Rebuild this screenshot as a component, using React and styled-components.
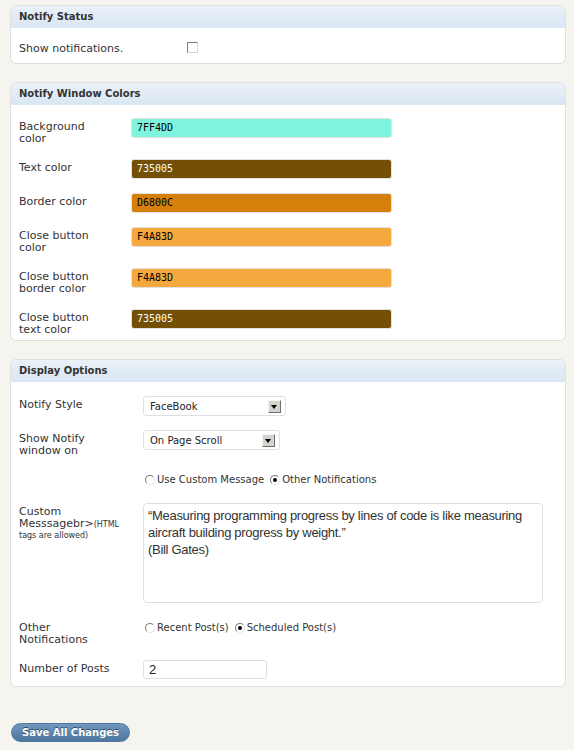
import styled, { createGlobalStyle } from "styled-components";

const colorFields = [
  { label: "Background color", value: "7FF4DD" },
  { label: "Text color", value: "735005" },
  { label: "Border color", value: "D6800C" },
  { label: "Close button color", value: "F4A83D" },
  { label: "Close button border color", value: "F4A83D" },
  { label: "Close button text color", value: "735005" },
];

// white text on dark swatches, black on light ones
const isDark = (hex) => {
  const n = parseInt(hex, 16);
  const r = (n >> 16) & 255;
  const g = (n >> 8) & 255;
  const b = n & 255;
  return r * 0.299 + g * 0.587 + b * 0.114 < 128;
};

export default function App() {
  return (
    <Page>
      <GlobalStyle />

      <Panel>
        <PanelHead>Notify Status</PanelHead>
        <PanelBody $pt={5} $pb={1}>
          <Row $col={168}>
            <Label>Show notifications.</Label>
            <Checkbox />
          </Row>
        </PanelBody>
      </Panel>

      <Panel>
        <PanelHead>Notify Window Colors</PanelHead>
        <PanelBody $pt={6} $pb={0}>
          {colorFields.map((f, idx) => (
            <Row key={idx} $col={112} $pb={idx === colorFields.length - 1 ? 4 : 7}>
              <Label $max={90}>{f.label}</Label>
              <ColorInput $bg={f.value} $dark={isDark(f.value)}>
                {f.value}
              </ColorInput>
            </Row>
          ))}
        </PanelBody>
      </Panel>

      <Panel>
        <PanelHead>Display Options</PanelHead>
        <PanelBody $pt={7} $pb={0}>
          <Row $col={124}>
            <Label $max={100}>Notify Style</Label>
            <Select $w={143}>
              FaceBook
              <Arrow />
            </Select>
          </Row>
          <Row $col={124}>
            <Label $max={100}>Show Notify window on</Label>
            <Select $w={137}>
              On Page Scroll
              <Arrow />
            </Select>
          </Row>
          <Row $col={124} $pb={10}>
            <span />
            <RadioGroup>
              <Radio />
              <RadioText>Use Custom Message</RadioText>
              <Radio $checked />
              <RadioText>Other Notifications</RadioText>
            </RadioGroup>
          </Row>
          <Row $col={124} $pb={9}>
            <Label $max={108}>
              Custom Messsagebr&gt;<Small>(HTML</Small>
              <Small $block>tags are allowed)</Small>
            </Label>
            <TextArea>
              “Measuring programming progress by lines of code is like measuring
              aircraft building progress by weight.”
              <br />
              (Bill Gates)
            </TextArea>
          </Row>
          <Row $col={124}>
            <Label $max={100}>Other Notifications</Label>
            <RadioGroup>
              <Radio />
              <RadioText>Recent Post(s)</RadioText>
              <Radio $checked />
              <RadioText>Scheduled Post(s)</RadioText>
            </RadioGroup>
          </Row>
          <Row $col={124}>
            <Label $max={100}>Number of Posts</Label>
            <NumberInput>2</NumberInput>
          </Row>
        </PanelBody>
      </Panel>

      <Submit>
        <Button>Save All Changes</Button>
      </Submit>
    </Page>
  );
}

const GlobalStyle = createGlobalStyle`
  body {
    margin: 0;
    background: #f5f4ef;
    font-family: "DejaVu Sans", Verdana, sans-serif;
    color: #333;
  }
`;

const Page = styled.div`
  padding: 5px 8px 10px 10px;
`;

const Panel = styled.div`
  background: #fff;
  border: 1px solid #dfdfdf;
  border-radius: 6px;
  overflow: hidden;
  margin-bottom: 18px;
`;

const PanelHead = styled.h3`
  margin: 0;
  height: 22px;
  line-height: 22px;
  padding: 0 8px;
  font-size: 10px;
  font-weight: bold;
  color: #333;
  background: linear-gradient(#eaf1f8, #d9e6f2);
`;

const PanelBody = styled.div`
  padding: ${({ $pt }) => $pt}px 8px ${({ $pb }) => $pb}px;
`;

const Row = styled.div`
  display: grid;
  grid-template-columns: ${({ $col }) => $col}px 1fr;
  align-items: start;
  padding: 7px 0 ${({ $pb }) => ($pb === undefined ? 7 : $pb)}px;
`;

const Label = styled.div`
  font-size: 11px;
  line-height: 12px;
  padding-top: 3px;
  max-width: ${({ $max }) => ($max ? `${$max}px` : "none")};
  color: #333;
`;

const Small = styled.span`
  display: ${({ $block }) => ($block ? "block" : "inline")};
  font-size: 8px;
  line-height: ${({ $block }) => ($block ? "10px" : "inherit")};
`;

const Checkbox = styled.span`
  display: block;
  width: 9px;
  height: 9px;
  margin-top: 2px;
  border: 1px solid;
  border-color: #7b7b7b #d8d8d8 #d8d8d8 #7b7b7b;
  background: #fff;
`;

const ColorInput = styled.div`
  box-sizing: border-box;
  width: 261px;
  height: 20px;
  line-height: 18px;
  padding-left: 5px;
  border: 1px solid #e2e2e2;
  border-radius: 3px;
  background: #${({ $bg }) => $bg};
  color: ${({ $dark }) => ($dark ? "#fff" : "#000")};
  font-family: "DejaVu Sans Mono", monospace;
  font-size: 10px;
`;

const Select = styled.div`
  box-sizing: border-box;
  display: flex;
  align-items: center;
  justify-content: space-between;
  width: ${({ $w }) => $w}px;
  height: 20px;
  padding: 0 4px 0 6px;
  border: 1px solid #e0e0e0;
  border-radius: 3px;
  background: #fff;
  font-size: 10px;
  color: #222;
`;

const Arrow = styled.span`
  box-sizing: border-box;
  position: relative;
  width: 13px;
  height: 13px;
  background: #d6d3cc;
  border: 1px solid;
  border-color: #f4f4f4 #6f6f6f #6f6f6f #f4f4f4;
  &::after {
    content: "";
    position: absolute;
    left: 2px;
    top: 4px;
    border-left: 3.5px solid transparent;
    border-right: 3.5px solid transparent;
    border-top: 4px solid #000;
  }
`;

const RadioGroup = styled.div`
  display: flex;
  align-items: center;
  padding-top: 3px;
  padding-left: 2px;
  height: 12px;
`;

const Radio = styled.span`
  box-sizing: border-box;
  position: relative;
  width: 10px;
  height: 10px;
  border-radius: 50%;
  border: 1px solid;
  border-color: #7a7a7a #e4e4e4 #e4e4e4 #7a7a7a;
  background: #fff;
  margin-right: 2px;
  &::after {
    content: "";
    display: ${({ $checked }) => ($checked ? "block" : "none")};
    position: absolute;
    left: 2px;
    top: 2px;
    width: 4px;
    height: 4px;
    border-radius: 50%;
    background: #000;
  }
`;

const RadioText = styled.span`
  font-size: 10px;
  line-height: 12px;
  color: #333;
  margin-right: 6px;
`;

const TextArea = styled.div`
  box-sizing: border-box;
  width: 400px;
  height: 100px;
  padding: 3px 4px;
  border: 1px solid #dfdfdf;
  border-radius: 4px;
  background: #fff;
  font-family: "Liberation Sans", Arial, sans-serif;
  font-size: 13px;
  letter-spacing: -0.3px;
  line-height: 17px;
  color: #333;
`;

const NumberInput = styled.div`
  box-sizing: border-box;
  width: 124px;
  height: 19px;
  line-height: 17px;
  padding-left: 5px;
  border: 1px solid #dfdfdf;
  border-radius: 3px;
  background: #fff;
  font-family: "Liberation Sans", Arial, sans-serif;
  font-size: 13px;
  color: #222;
`;

const Submit = styled.div`
  margin-top: 34px;
  padding-left: 1px;
`;

const Button = styled.button`
  height: 19px;
  padding: 0 10px;
  border: 1px solid #4a7aa3;
  border-radius: 11px;
  background: linear-gradient(#7197bd, #4d769e);
  color: #fff;
  font-family: "DejaVu Sans", Verdana, sans-serif;
  font-size: 10px;
  font-weight: bold;
  text-shadow: 0 -1px 0 #2d4d6c;
  cursor: pointer;
`;
